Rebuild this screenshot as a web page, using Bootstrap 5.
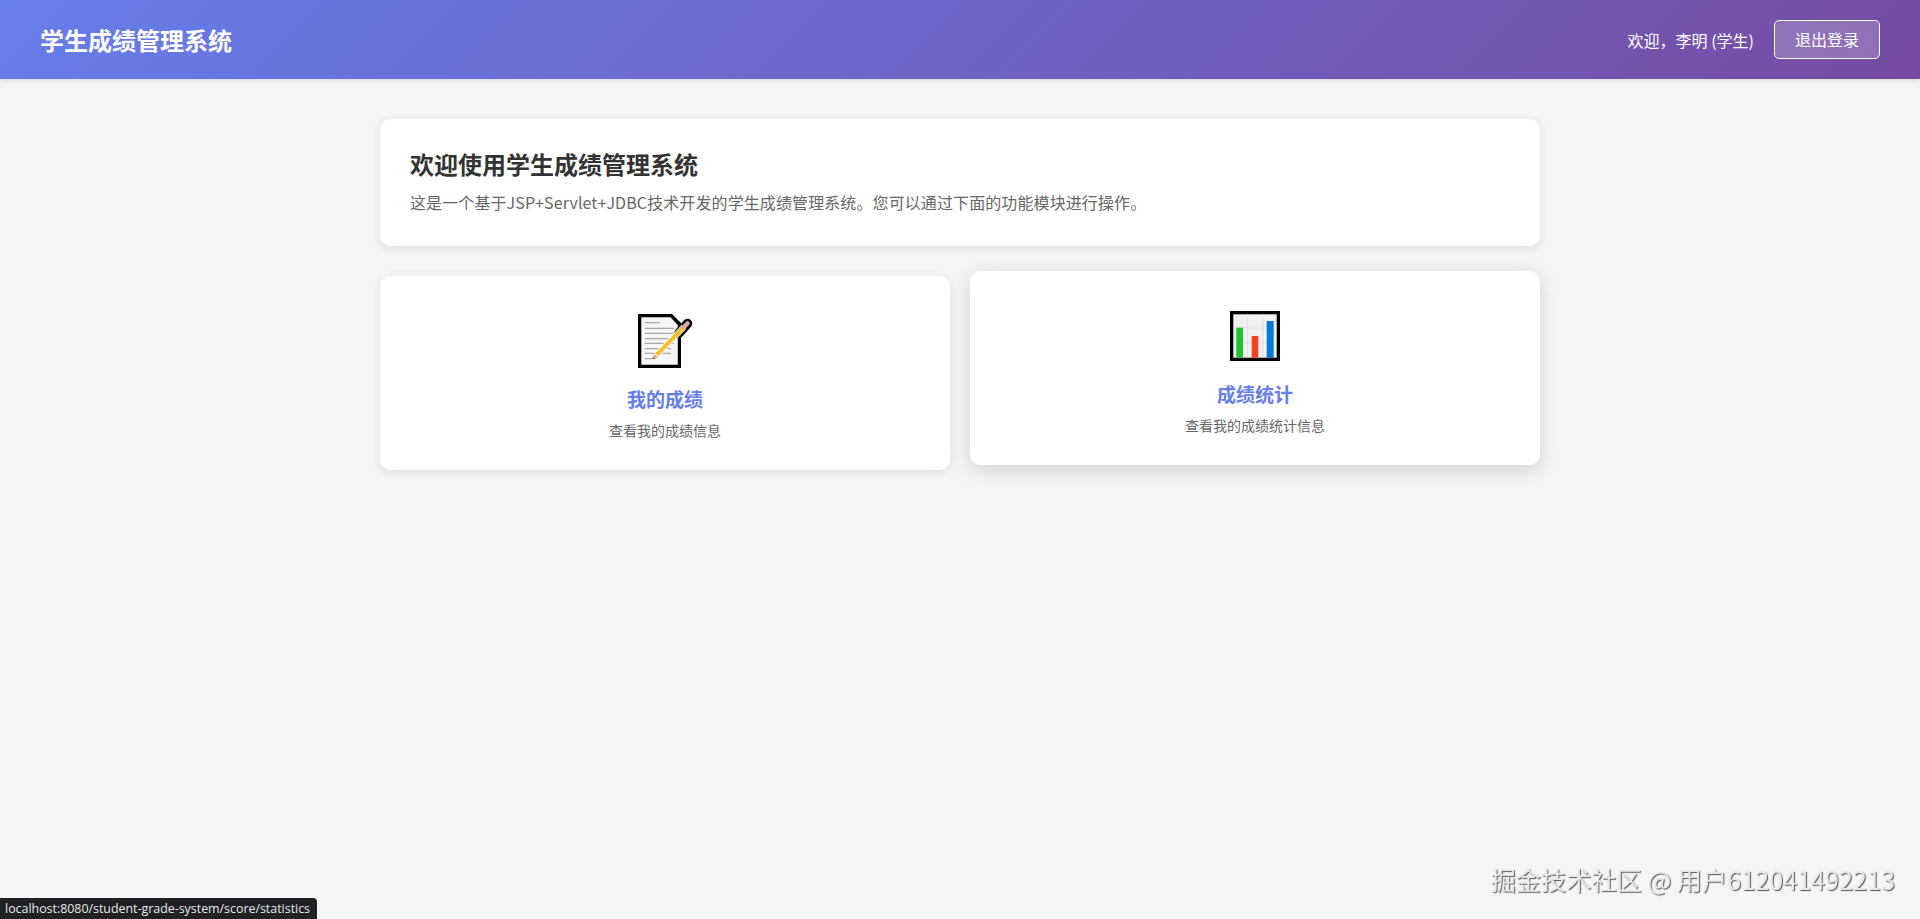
<!DOCTYPE html>
<html lang="zh-CN">
<head>
<meta charset="utf-8">
<title>学生成绩管理系统</title>
<link href="https://cdn.jsdelivr.net/npm/bootstrap@5.3.0/dist/css/bootstrap.min.css" rel="stylesheet">
<style>
html,body{height:100%;}
body{background:#f5f5f5;font-family:"Noto Sans CJK SC","Noto Sans",sans-serif;color:#333;overflow:hidden;}
.top-bar{height:79px;padding:20px 40px;background:linear-gradient(135deg,#667eea 0%,#764ba2 100%);box-shadow:0 2px 4px rgba(0,0,0,.1);color:#fff;}
.brand-title{font-size:24px;font-weight:700;line-height:28px;margin:0;}
.user-box{gap:20px;}
.user-text{font-size:16px;line-height:24px;}
.logout-btn{width:106px;height:39px;padding:0;font-size:16px;line-height:37px;color:#fff;background:rgba(255,255,255,.2);border:1px solid #fff;border-radius:5px;}
.page-wrap{width:1160px;margin:40px auto 0;}
.panel-box{background:#fff;border:0;border-radius:10px;box-shadow:0 2px 10px rgba(0,0,0,.1);}
.welcome-box{height:127px;padding:29px 30px 0;margin-bottom:30px;}
.welcome-box h2{font-size:24px;font-weight:700;line-height:32px;margin:0 0 10px;color:#333;}
.welcome-box p{font-size:16px;line-height:24px;margin:0;color:#666;letter-spacing:.1px;}
.module-grid{display:grid;grid-template-columns:1fr 1fr;gap:20px;}
.module-box{height:194px;padding:38px 30px 0;text-align:center;}
.module-hover{transform:translateY(-5px);box-shadow:0 5px 20px rgba(0,0,0,.15);padding-top:40px;}
.module-box svg{display:block;margin:0 auto;}
.module-box h3{font-size:19px;font-weight:700;line-height:26px;color:#667eea;margin:0 0 8px;}
.module-box p{font-size:14px;line-height:20px;color:#666;margin:0;}
.icon-one{margin-bottom:18px!important;}
.icon-two{margin-bottom:20px!important;}
.status-tip{position:fixed;left:0;bottom:0;height:21px;width:317px;padding:0 5px;background:#202124;color:#e8eaed;border-top-right-radius:4px;font:12.4px/21px "Open Sans","Noto Sans",sans-serif;white-space:nowrap;}
.water-mark{position:fixed;right:25px;bottom:23px;font-size:25.2px;line-height:34px;color:#e9e9e9;text-shadow:1px 1px 1px #555;white-space:nowrap;}
</style>
</head>
<body>
<header class="top-bar d-flex justify-content-between align-items-center">
  <h1 class="brand-title">学生成绩管理系统</h1>
  <div class="d-flex align-items-center user-box">
    <span class="user-text">欢迎，李明 (学生)</span>
    <a href="#" class="btn logout-btn">退出登录</a>
  </div>
</header>
<main class="page-wrap">
  <section class="panel-box welcome-box">
    <h2>欢迎使用学生成绩管理系统</h2>
    <p>这是一个基于JSP+Servlet+JDBC技术开发的学生成绩管理系统。您可以通过下面的功能模块进行操作。</p>
  </section>
  <div class="module-grid">
    <a href="#" class="panel-box module-box text-decoration-none d-block">
      <svg class="icon-one" width="55" height="54" viewBox="0 0 55 54">
        <path d="M0 0H34L43 9V54H0Z" fill="#000"/>
        <path d="M3.3 3.3H32.5L39.8 11V50.7H3.3Z" fill="#f6f6f6"/>
        <g stroke="#a8a8a8" stroke-width="1.3">
          <path d="M6.7 8.7H22M6.7 14.3H36M6.7 19.3H36M6.7 24.7H36M6.7 29.3H36M6.7 34.7H33M6.7 39.3H33M6.7 44.7H14"/>
        </g>
        <path d="M41 19L49.5 9.5" stroke="#000" stroke-width="9.5" stroke-linecap="round"/>
        <path d="M18 41.5L46 13" stroke="#fff" stroke-width="6.5" opacity=".75"/>
        <path d="M18.5 41L46.5 12.5" stroke="#f6c12f" stroke-width="4"/>
        <path d="M46 13L49.5 9.5" stroke="#dca7a2" stroke-width="4.5" stroke-linecap="round"/>
        <path d="M14.5 45.3L16.4 40L20 43.5Z" fill="#d8b27a"/>
        <path d="M14.5 45.3L15.3 43L16.8 44.5Z" fill="#333"/>
      </svg>
      <h3>我的成绩</h3>
      <p>查看我的成绩信息</p>
    </a>
    <a href="#" class="panel-box module-box module-hover text-decoration-none d-block">
      <svg class="icon-two" width="50" height="50" viewBox="0 0 50 50">
        <rect width="50" height="50" fill="#000"/>
        <rect x="3.3" y="3.3" width="43.4" height="43.4" fill="#f1f1f1"/>
        <path d="M17.5 3.3V46.7M33 3.3V46.7M3.3 17H46.7M3.3 32H46.7" stroke="#e2e2e2" stroke-width="1"/>
        <rect x="6.3" y="16.7" width="6.7" height="30" fill="#21c12b"/>
        <rect x="21.7" y="25" width="6.6" height="21.7" fill="#f4411f"/>
        <rect x="36.7" y="10" width="7" height="36.7" fill="#0a78d6"/>
      </svg>
      <h3>成绩统计</h3>
      <p>查看我的成绩统计信息</p>
    </a>
  </div>
</main>
<div class="status-tip">localhost:8080/student-grade-system/score/statistics</div>
<div class="water-mark">掘金技术社区 @ 用户612041492213</div>
<script src="https://cdn.jsdelivr.net/npm/bootstrap@5.3.0/dist/js/bootstrap.bundle.min.js"></script>
</body>
</html>
